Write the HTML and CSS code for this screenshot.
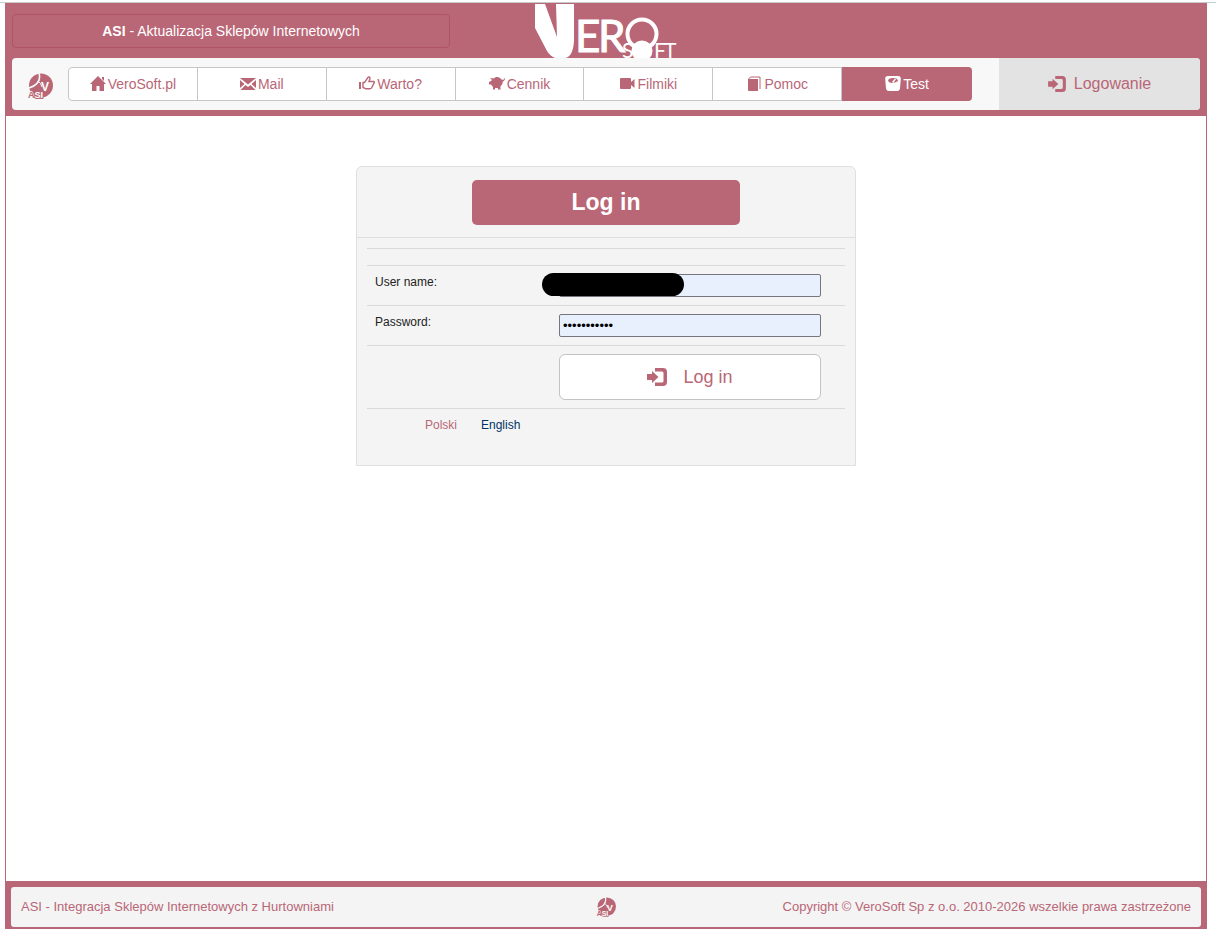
FILE: index.html
```html
<!DOCTYPE html>
<html lang="pl">
<head>
    <meta charset="UTF-8">
    <meta name="viewport" content="width=device-width, initial-scale=1.0">
    <title>ASI - Log in</title>
    <link rel="stylesheet" href="styles.css">
</head>
<body>
    <!-- shared icons -->
    <svg class="symbols" aria-hidden="true">
        <symbol id="asi" viewBox="0 0 26 26">
            <circle cx="14" cy="12.500" r="12" fill="#b96676"/>
            <path d="M12 0C14 7 11 12 2 15" fill="none" stroke="#f8f8f8" stroke-width="1.600"/>
            <path d="M11 8Q14 10 15 14" fill="none" stroke="#f8f8f8" stroke-width="1"/>
            <text x="14" y="18" class="mark-v">V</text>
            <text x="1" y="25" class="mark-asi"><tspan class="mark-a">A</tspan>SI</text>
        </symbol>
        <symbol id="login" viewBox="0 0 20 18">
            <path d="M0 6h5V3l6.500 6L5 15v-3H0z"/>
            <path d="M8 0h8a4 4 0 0 1 4 4v10a4 4 0 0 1-4 4H8v-3.500h7a1.500 1.500 0 0 0 1.500-1.500V5A1.500 1.500 0 0 0 15 3.500H8z"/>
        </symbol>
    </svg>

    <div class="page">
        <header class="header">
            <div class="header-top">
                <div class="title"><b>ASI</b> - Aktualizacja Sklepów Internetowych</div>
                <svg class="logo" viewBox="0 0 142 55" role="img" aria-label="VeroSoft">
                    <path d="M0 1H10L22 34L21 1H39V38Q38 55 29 55H20Q15 53 12 48L0 25Z"/>
                    <text x="40" y="49" class="logo-big">E</text>
                    <text x="63" y="49" class="logo-big">R</text>
                    <circle cx="107" cy="31" r="14.500" class="logo-ring"/>
                    <circle cx="107" cy="48" r="10.500"/>
                    <text x="87" y="55" class="logo-small">S</text>
                    <text x="119" y="55" class="logo-small">F</text>
                    <text x="129" y="55" class="logo-small">T</text>
                </svg>
            </div>
            <nav class="nav">
                <a href="#" class="brand" aria-label="ASI"><svg><use href="#asi"/></svg></a>
                <div class="menu">
                    <a href="#"><svg viewBox="0 0 16 16"><path d="M8 0l8 8h-2v7H9.500v-5h-3v5H2V8H0zM12 1h2v4l-2-2z"/></svg>VeroSoft.pl</a>
                    <a href="#"><svg viewBox="0 0 16 16"><path d="M0 2h16L8 8.500zM0 4l4.500 4L0 12zM16 4v8l-4.500-4zM5.500 9L8 11l2.500-2 5 5H.5z"/></svg>Mail</a>
                    <a href="#"><svg viewBox="0 0 16 16"><path d="M0 6h2v7H0z"/><path d="M4 6.500h1.500L9 1.500c.5-1 2-.5 2 .7L10 5.500h4.500c1 0 1 1 .5 1.700L12.500 12c-.4.7-1 .8-1.700.8H7L4 11.500z" class="outline thick"/></svg>Warto?</a>
                    <a href="#"><svg viewBox="0 0 16 16"><path d="M0 6l2-1 1-1-2-2 4 .5C7 0 11 1 12.500 3.500l2 .5.5-2 1 1-1 2-1.300.5c0 2-.7 3.500-2.200 4.500v3.500H9V12H6v1.500H4V11L2 8.500H0z"/></svg>Cennik</a>
                    <a href="#"><svg viewBox="0 0 16 16"><path d="M1 2h9q1 0 1 1v3l3.500-3v9L11 9v3q0 1-1 1H1q-1 0-1-1V3q0-1 1-1z"/></svg>Filmiki</a>
                    <a href="#"><svg viewBox="0 0 16 16"><path d="M2 3h10v12H3q-1 0-1-1z"/><path d="M2.500 3l2-2h9.500v12" class="outline"/></svg>Pomoc</a>
                    <a href="#" class="active"><svg viewBox="0 0 16 16"><path fill-rule="evenodd" d="M3 0h10q3 0 2.800 3L15 12.500q-.3 2.500-3 2.500H4q-2.700 0-3-2.500L.2 3Q0 0 3 0zM8 2C5 2 3 3.300 3 5q2 2.500 5 2t5-2C13 3.300 11 2 8 2z"/><path d="M7 6l3-3.500 1 .5L8.500 7z"/></svg>Test</a>
                </div>
                <a href="#" class="signin"><svg><use href="#login"/></svg>Logowanie</a>
            </nav>
        </header>

        <main>
            <form class="panel">
                <div class="panel-heading"><h1>Log in</h1></div>
                <div class="panel-body">
                    <div class="row spacer"></div>
                    <div class="row">
                        <label for="user">User name:</label>
                        <div class="field">
                            <input type="text" id="user">
                            <span class="mask"></span>
                        </div>
                    </div>
                    <div class="row">
                        <label for="password">Password:</label>
                        <div class="field"><input type="password" id="password" value="abcdefghijk"></div>
                    </div>
                    <div class="row">
                        <span></span>
                        <button type="button"><svg><use href="#login"/></svg>Log in</button>
                    </div>
                    <div class="row languages">
                        <a href="#">Polski</a>
                        <a href="#" class="current">English</a>
                    </div>
                </div>
            </form>
        </main>

        <footer class="footer">
            <div class="footer-bar">
                <span>ASI - Integracja Sklepów Internetowych z Hurtowniami</span>
                <svg><use href="#asi"/></svg>
                <span class="copyright">Copyright © VeroSoft Sp z o.o. 2010-2026 wszelkie prawa zastrzeżone</span>
            </div>
        </footer>
    </div>
</body>
</html>
```
FILE: styles.css
```css
* {
    box-sizing: border-box;
}
html {
    border-top: 2px solid #fff;
}
body {
    margin: 0;
    padding: 0 9px 0 5px;
    border-top: 1px solid #c8cacc;
    background-color: #fff;
    font-family: "Liberation Sans", Arial, sans-serif;
    font-size: 14px;
    line-height: 20px;
    color: #222;
}
a {
    color: #b96676;
    text-decoration: none;
}
svg {
    fill: currentColor;
}
.symbols {
    position: absolute;
    width: 0;
    height: 0;
}
.page {
    display: flex;
    flex-direction: column;
    min-height: calc(100vh - 3px);
    border: 1px solid #b96676;
    border-width: 0 1px;
}

/* header */
.header {
    padding: 0 6px 6px;
    background-color: #b96676;
}
.header-top {
    display: grid;
    grid-template-columns: 1fr 142px 1fr;
    height: 55px;
}
.title {
    height: 34px;
    margin: 11px 85px 0 0;
    padding: 6px;
    border: 1px solid #b05464;
    border-radius: 4px;
    text-align: center;
    color: #fff;
}
.logo {
    width: 142px;
    height: 55px;
    color: #fff;
}
.logo-big {
    font: 44px Lato, sans-serif;
    stroke: #fff;
    stroke-width: 1px;
}
.logo-small {
    font: 21px Lato, sans-serif;
}
.logo-ring {
    fill: none;
    stroke: #fff;
    stroke-width: 4px;
}
.mark-v {
    font: bold 12px "Liberation Sans", sans-serif;
    fill: #fff;
}
.mark-asi {
    font: bold 9px "Liberation Sans", sans-serif;
    fill: #fff;
    stroke: #b96676;
    stroke-width: 2px;
    paint-order: stroke;
}
.mark-a {
    fill: #b96676;
    stroke: #f8f8f8;
    stroke-width: 1px;
}
.nav {
    display: flex;
    height: 52px;
    border-radius: 4px;
    background-color: #f8f8f8;
    overflow: hidden;
}
.brand {
    flex: 0 0 56px;
    padding: 15px;
}
.brand svg {
    display: block;
    width: 26px;
    height: 26px;
}
.menu {
    display: grid;
    grid-template-columns: repeat(7, 1fr);
    flex: 1;
    margin: 9px 27px 9px 0;
    border: 1px solid #c4c6c8;
    border-radius: 4px;
    background-color: #fff;
}
.menu a {
    display: flex;
    align-items: center;
    justify-content: center;
    gap: 2px;
    border-right: 1px solid #c4c6c8;
}
.menu svg {
    width: 16px;
    height: 16px;
}
.outline {
    fill: none;
    stroke: #b96676;
    stroke-width: 1px;
}
.outline.thick {
    stroke-width: 1.4px;
}
.menu .active {
    margin: -1px -1px -1px 0;
    border: 0;
    border-radius: 0 4px 4px 0;
    background-color: #b96676;
    color: #fff;
}
.signin {
    display: flex;
    flex: 0 0 201px;
    align-items: center;
    justify-content: center;
    gap: 8px;
    background-color: #e3e3e3;
    font-size: 16px;
}
.signin svg {
    width: 18px;
    height: 16px;
}

/* login form */
main {
    flex: 1;
    padding: 50px 0;
}
.panel {
    width: 500px;
    min-height: 300px;
    margin: 0 auto;
    border: 1px solid #dde1e1;
    border-radius: 6px 6px 0 0;
    background-color: #f4f4f4;
    font-size: 12px;
}
.panel-heading {
    padding: 13px 115px 12px;
    border-bottom: 1px solid #dcdfe1;
}
h1 {
    margin: 0;
    padding: 10px;
    border-radius: 5px;
    background-color: #b96676;
    color: #fff;
    font-size: 23px;
    line-height: 25px;
    text-align: center;
}
.panel-body {
    padding: 10px;
}
.row {
    display: grid;
    grid-template-columns: 184px 262px;
    padding: 8px;
    border-top: 1px solid #d9dadc;
}
.spacer {
    height: 17px;
}
.row label {
    line-height: 16px;
}
.field {
    position: relative;
    height: 23px;
}
.field input {
    display: block;
    width: 100%;
    height: 23px;
    padding: 1px 3px;
    border: 1px solid #767680;
    border-radius: 2px;
    background-color: #e8f0fe;
    color: #000;
    font: 13px "Liberation Sans", Arial, sans-serif;
}
.mask {
    position: absolute;
    top: -1px;
    left: -17px;
    width: 142px;
    height: 23px;
    border-radius: 12px;
    background-color: #000;
}
button {
    display: flex;
    align-items: center;
    justify-content: center;
    gap: 16px;
    height: 46px;
    border: 1px solid #c0c4c4;
    border-radius: 6px;
    background-color: #fff;
    color: #b96676;
    font: 18px "Liberation Sans", Arial, sans-serif;
}
button svg {
    width: 20px;
    height: 18px;
}
.languages {
    display: flex;
    gap: 24px;
    padding: 6px 58px;
}
.languages .current {
    color: #003366;
}

/* footer */
.footer {
    padding: 6px 5px 2px;
    background-color: #b96676;
}
.footer-bar {
    display: grid;
    grid-template-columns: 1fr 20px 1fr;
    align-items: center;
    height: 40px;
    padding: 0 10px;
    border-radius: 3px;
    background-color: #f4f4f4;
    color: #b96676;
    font-size: 13px;
}
.footer-bar svg {
    width: 20px;
    height: 20px;
}
.copyright {
    text-align: right;
}
```
